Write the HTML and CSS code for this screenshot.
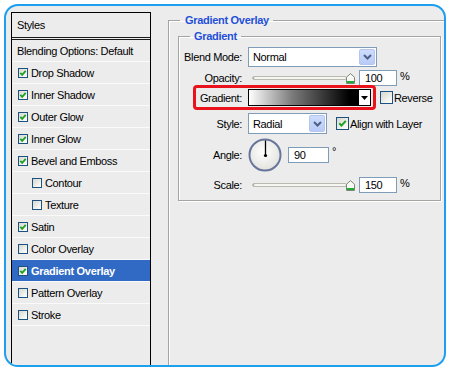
FILE: index.html
```html
<!DOCTYPE html>
<html>
<head>
<meta charset="utf-8">
<title>Layer Style - Gradient Overlay</title>
<link rel="stylesheet" href="styles.css">
</head>
<body>
<div class="frame">
  <div class="styles-panel">
    <div class="panel-head">Styles</div>
    <div class="row">Blending Options: Default</div>
    <div class="row"><span class="cb on"><svg viewBox="0 0 8 8"><polyline points="1.3,3.8 3.2,5.9 6.7,1.8"/></svg></span>Drop Shadow</div>
    <div class="row"><span class="cb on"><svg viewBox="0 0 8 8"><polyline points="1.3,3.8 3.2,5.9 6.7,1.8"/></svg></span>Inner Shadow</div>
    <div class="row"><span class="cb on"><svg viewBox="0 0 8 8"><polyline points="1.3,3.8 3.2,5.9 6.7,1.8"/></svg></span>Outer Glow</div>
    <div class="row"><span class="cb on"><svg viewBox="0 0 8 8"><polyline points="1.3,3.8 3.2,5.9 6.7,1.8"/></svg></span>Inner Glow</div>
    <div class="row"><span class="cb on"><svg viewBox="0 0 8 8"><polyline points="1.3,3.8 3.2,5.9 6.7,1.8"/></svg></span>Bevel and Emboss</div>
    <div class="row sub"><span class="cb"></span>Contour</div>
    <div class="row sub"><span class="cb"></span>Texture</div>
    <div class="row"><span class="cb on"><svg viewBox="0 0 8 8"><polyline points="1.3,3.8 3.2,5.9 6.7,1.8"/></svg></span>Satin</div>
    <div class="row"><span class="cb"></span>Color Overlay</div>
    <div class="row selected"><span class="cb on"><svg viewBox="0 0 8 8"><polyline points="1.3,3.8 3.2,5.9 6.7,1.8"/></svg></span>Gradient Overlay</div>
    <div class="row"><span class="cb"></span>Pattern Overlay</div>
    <div class="row"><span class="cb"></span>Stroke</div>
  </div>

  <div class="main">
    <fieldset class="group outer">
      <legend>Gradient Overlay</legend>
      <fieldset class="group inner">
        <legend>Gradient</legend>

        <div class="frow r-blend">
          <span class="lbl">Blend Mode:</span>
          <div class="select w-blend"><span class="val">Normal</span><span class="drop"><svg viewBox="0 0 9 6"><polyline points="1,1 4.5,4.5 8,1"/></svg></span></div>
        </div>

        <div class="frow r-opacity">
          <span class="lbl">Opacity:</span>
          <div class="slider">
            <span class="track"></span>
            <svg class="thumb" viewBox="0 0 9 11"><path class="t-body" d="M0.5 4.2 L4.5 0.6 L8.5 4.2 V10.5 H0.5 Z"/><rect class="t-green" x="1" y="8" width="7" height="2"/></svg>
          </div>
          <span class="num">100</span>
          <span class="unit">%</span>
        </div>

        <div class="frow r-gradient">
          <div class="hl">
            <span class="lbl lbl-hl">Gradient:</span>
            <span class="swatch"></span>
            <span class="mini-drop"><svg viewBox="0 0 7 4"><polygon points="0,0 7,0 3.5,4"/></svg></span>
          </div>
          <span class="cb big"></span>
          <span class="cb-text">Reverse</span>
        </div>

        <div class="frow r-style">
          <span class="lbl">Style:</span>
          <div class="select w-style"><span class="val">Radial</span><span class="drop"><svg viewBox="0 0 9 6"><polyline points="1,1 4.5,4.5 8,1"/></svg></span></div>
          <span class="cb big on align-cb"><svg viewBox="0 0 11 11"><polyline points="2.3,5.2 4.5,7.6 8.8,2.8"/></svg></span>
          <span class="cb-text">Align with Layer</span>
        </div>

        <div class="frow r-angle">
          <span class="lbl">Angle:</span>
          <svg class="dial" viewBox="0 0 34 34">
            <defs>
              <radialGradient id="dialfill" cx="45%" cy="40%" r="60%">
                <stop offset="0" stop-color="#ffffff"/>
                <stop offset="1" stop-color="#e2e2de"/>
              </radialGradient>
            </defs>
            <circle cx="17" cy="17" r="15.5" fill="url(#dialfill)" stroke="#66759a" stroke-width="2"/>
            <line x1="17.5" y1="17.5" x2="17.5" y2="2.5" stroke="#000" stroke-width="1.3"/>
            <circle cx="17.5" cy="17.5" r="1.6" fill="#000"/>
          </svg>
          <span class="num num-angle">90</span>
          <span class="unit deg">°</span>
        </div>

        <div class="frow r-scale">
          <span class="lbl">Scale:</span>
          <div class="slider">
            <span class="track"></span>
            <svg class="thumb" viewBox="0 0 9 11"><path class="t-body" d="M0.5 4.2 L4.5 0.6 L8.5 4.2 V10.5 H0.5 Z"/><rect class="t-green" x="1" y="8" width="7" height="2"/></svg>
          </div>
          <span class="num">150</span>
          <span class="unit">%</span>
        </div>
      </fieldset>
    </fieldset>
  </div>
</div>
</body>
</html>
```

FILE: styles.css
```css
* { box-sizing: border-box; }

html, body {
  margin: 0;
  padding: 0;
  background: #ffffff;
}

body {
  font-family: "Liberation Sans", Arial, sans-serif;
  font-size: 11px;
  letter-spacing: -0.35px;
  color: #000;
}

.frame {
  margin: 4px;
  width: 442px;
  height: 363px;
  border: 2px solid #1d9ff0;
  border-radius: 14px;
  background: #ececec;
  overflow: hidden;
  display: flex;
  align-items: flex-start;
  padding: 6px 0 0 5px;
}

/* ---------- left styles list ---------- */
.styles-panel {
  flex: none;
  width: 140px;
  height: 400px;
  border: 1px solid #000;
  background: #ececec;
}

.panel-head {
  height: 27px;
  padding-left: 5px;
  display: flex;
  align-items: center;
  border-bottom: 3px double #1a1a1a;
}

.row {
  height: 22px;
  padding-left: 5px;
  display: flex;
  align-items: center;
  border-bottom: 1px solid #fafafa;
  white-space: nowrap;
}

.row .cb {
  margin-left: 1px;
}

.row.sub {
  padding-left: 19px;
}

.row.selected {
  background: #316ac5;
  color: #fff;
  font-weight: bold;
  letter-spacing: -0.3px;
}

.cb {
  flex: none;
  width: 10px;
  height: 10px;
  margin-right: 3px;
  border: 1px solid #1c5180;
  background: linear-gradient(135deg, #d6d6cf 0%, #f4f4f0 70%, #ffffff 100%);
  display: inline-flex;
  align-items: center;
  justify-content: center;
}

.cb svg {
  width: 8px;
  height: 8px;
  display: block;
}

.cb svg polyline {
  fill: none;
  stroke: #21a121;
  stroke-width: 1.8;
}

.cb.big {
  width: 13px;
  height: 13px;
  margin-left: 4px;
  margin-right: 1px;
}

.cb.big svg {
  width: 11px;
  height: 11px;
}

.cb.big svg polyline {
  stroke-width: 2;
}

.cb.align-cb {
  margin-left: 9px;
}

/* ---------- right side ---------- */
.main {
  flex: 1;
  min-width: 0;
  padding-left: 17px;
}

.group {
  margin: 0;
  min-width: 0;
  border: 1px solid #a4a4a0;
}

.group legend {
  font-weight: bold;
  color: #1f4fd8;
  line-height: 13px;
  letter-spacing: -0.3px;
  padding: 0 4px 0 5px;
}

.outer {
  margin-top: 2px;
  margin-right: -20px;
  height: 400px;
  padding: 3px 0 0 9px;
  box-shadow: inset 1px 1px 0 #ffffff;
}

.outer > legend {
  margin-left: 2px;
}

.inner {
  width: 263px;
  padding: 0 0 7px 0;
  box-shadow: inset 1px 1px 0 #ffffff, 1px 1px 0 #ffffff;
}

.inner > legend {
  margin-left: 11px;
  padding: 0 4px;
}

.frow {
  display: flex;
  align-items: center;
  white-space: nowrap;
}

.lbl {
  flex: none;
  width: 63px;
  margin-right: 6px;
  text-align: right;
}

.r-blend { margin-top: 4px; height: 20px; }
.r-opacity { margin-top: 3px; height: 16px; }
.r-gradient { margin-top: -1px; height: 25px; }
.r-style { margin-top: 3px; height: 21px; }
.r-angle { margin-top: 4px; height: 34px; }
.r-scale { margin-top: 5px; height: 16px; }

/* select */
.select {
  flex: none;
  height: 100%;
  display: flex;
  border: 1px solid #7f9db9;
  background: #fff;
  padding: 1px;
}

.w-blend { width: 129px; }
.w-style { width: 79px; }

.select .val {
  flex: 1;
  padding-left: 3px;
  display: flex;
  align-items: center;
}

.select .drop {
  flex: none;
  width: 16px;
  border-radius: 2px;
  background: linear-gradient(180deg, #cddcfe 0%, #b9cbf6 100%);
  border: 1px solid #b3c6f2;
  display: flex;
  align-items: center;
  justify-content: center;
}

.select .drop svg {
  width: 9px;
  height: 6px;
  display: block;
}

.select .drop polyline {
  fill: none;
  stroke: #4d6185;
  stroke-width: 2;
}

/* slider */
.slider {
  flex: none;
  display: flex;
  align-items: center;
  margin-left: 4px;
}

.track {
  width: 95px;
  height: 4px;
  border: 1px solid #b9b9b2;
  border-radius: 2px;
  background: #f6f6f1;
  box-shadow: inset 1px 0 0 #9a9a94;
}

.thumb {
  width: 9px;
  height: 11px;
  margin-left: -1px;
  display: block;
}

.t-body {
  fill: #f7f7f4;
  stroke: #7a8a7a;
  stroke-width: 1;
}

.t-green {
  fill: #21a936;
}

/* number inputs */
.num {
  flex: none;
  width: 38px;
  height: 16px;
  margin-left: 4px;
  padding-left: 5px;
  border: 1px solid #7f9db9;
  background: #fff;
  display: flex;
  align-items: center;
}

.num-angle {
  width: 41px;
  margin-left: 6px;
}

.unit {
  align-self: flex-start;
  margin-left: 3px;
  line-height: 13px;
}

.deg {
  align-self: center;
  margin-top: -8px;
}

/* gradient highlight */
.hl {
  flex: none;
  width: 183px;
  height: 25px;
  margin-left: 14px;
  border: 3px solid #e8131b;
  border-radius: 4px;
  display: flex;
  align-items: center;
  padding-right: 2px;
}

.lbl-hl {
  width: 46px;
}

.swatch {
  flex: none;
  width: 111px;
  height: 17px;
  border: 1px solid #000;
  background: linear-gradient(90deg, #ffffff 0%, #7a7a7a 40%, #000000 92%);
}

.mini-drop {
  flex: none;
  width: 12px;
  height: 17px;
  border: 1px solid #000;
  border-left: none;
  background: #fff;
  display: flex;
  align-items: center;
  justify-content: center;
}

.mini-drop svg {
  width: 7px;
  height: 4px;
  display: block;
  fill: #000;
}

.dial {
  flex: none;
  width: 34px;
  height: 34px;
  display: block;
}
```
